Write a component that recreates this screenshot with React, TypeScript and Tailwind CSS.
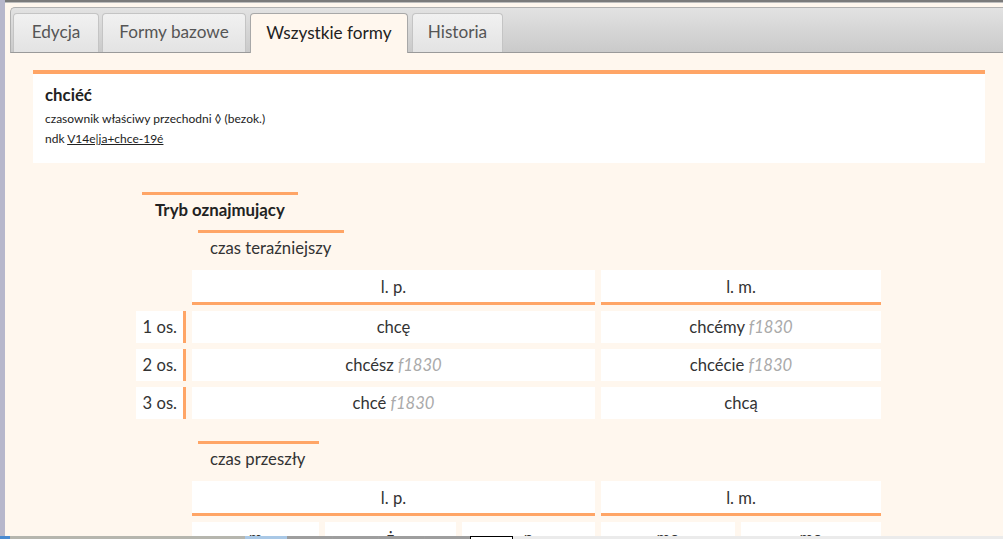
import React from "react";

const F = ({ children }: { children: React.ReactNode }) => (
  <span className="italic text-[#aaaaaa]">{children}</span>
);

function Cell({ children, className = "" }: { children?: React.ReactNode; className?: string }) {
  return (
    <div className={`bg-white h-[32px] flex items-center justify-center text-[16.6px] text-[#333] ${className}`}>
      {children}
    </div>
  );
}

function Label({ children }: { children: React.ReactNode }) {
  return (
    <div className="bg-white h-[32px] flex items-center justify-end pr-[6px] border-r-[3px] border-[#ffa566] text-[16.6px] text-[#333]">
      {children}
    </div>
  );
}

function Header() {
  return (
    <>
      <div />
      <div className="bg-white h-[35px] border-b-[3px] border-[#ffa566] flex items-center justify-center text-[16.6px] text-[#333] pt-[2px]">
        l. p.
      </div>
      <div className="bg-white h-[35px] border-b-[3px] border-[#ffa566] flex items-center justify-center text-[16.6px] text-[#333] pt-[2px]">
        l. m.
      </div>
    </>
  );
}

function Sub({ children, className = "" }: { children: React.ReactNode; className?: string }) {
  return (
    <div className={`ml-[62px] inline-block self-start border-t-[3px] border-[#ffa566] pl-[12px] pt-[4px] pb-[4px] text-[16.7px] leading-[22px] text-[#333] ${className}`}>
      {children}
    </div>
  );
}

export default function App() {
  const tabs = [
    { t: "Edycja", w: "w-[86px]" },
    { t: "Formy bazowe", w: "w-[144px]" },
    { t: "Wszystkie formy", w: "w-[158px]", active: true },
    { t: "Historia", w: "w-[91px]" },
  ];
  return (
    <div className="relative w-[1003px] h-[539px] overflow-hidden flex font-['Lato',sans-serif] bg-[#fff7ee]">
      <div className="w-[5px] h-full bg-[#b7b7cb] shrink-0" />
      <div className="flex-1 flex flex-col bg-[#fff7ee] min-w-0">
        <div className="h-[2px] bg-[#7a7a7a] shrink-0" />
        <div className="h-[1px] bg-[#bdbdbd] shrink-0" />
        <div className="h-[4px] shrink-0" />
        {/* tab bar */}
        <div className="ml-[5px] h-[46px] shrink-0 rounded-tl-[5px] border-t border-l border-[#b0b0b0] border-b border-b-[#9a9a9a] bg-gradient-to-b from-[#e2e2e2] to-[#cacaca] flex items-end pl-[2px] gap-[3px] relative">
          {tabs.map((tab, i) => (
            <div
              key={tab.t}
              className={`${tab.w} ${i === 3 ? "ml-[1px]" : ""} ${i === 2 ? "ml-[1px]" : ""} h-[39px] rounded-t-[4px] border border-b-0 flex items-center justify-center text-[17.2px] ${
                tab.active
                  ? "bg-[#fff7ee] border-[#a8a8a8] text-[#222] h-[40px] -mb-[1px] relative z-10"
                  : "bg-gradient-to-b from-[#f1f1f1] to-[#e3e3e3] border-[#c4c4c4] text-[#555]"
              }`}
            >
              <span className="pb-[2px]">{tab.t}</span>
            </div>
          ))}
        </div>

        {/* card */}
        <div className="mt-[17px] ml-[28px] mr-[18px] bg-white border-t-4 border-[#ffa566] h-[93px] pl-[12px] pt-[10px] text-[#222] shrink-0">
          <div className="text-[16.8px] font-bold leading-[22px]">chciéć</div>
          <div className="text-[12px] leading-[15px] mt-[5px]">czasownik właściwy przechodni ◊ (bezok.)</div>
          <div className="text-[12px] leading-[15px] mt-[5px]">
            ndk <span className="underline">V14e|ja+chce-19é</span>
          </div>
        </div>

        {/* section */}
        <div className="ml-[131px] mt-[29px] flex flex-col shrink-0">
          <div className="ml-[6px] self-start w-[156px] border-t-[3px] border-[#ffa566] pl-[13px] pt-[4px] pb-[4px] text-[16.8px] leading-[22px] font-bold text-[#222] whitespace-nowrap">
            Tryb oznajmujący
          </div>
          <Sub className="mt-[5px] w-[146px]">czas teraźniejszy</Sub>
          <div className="grid grid-cols-[50px_403px_280px] gap-[6px] mt-[7px]">
            <Header />
            <Label>1 os.</Label>
            <Cell>chcę</Cell>
            <Cell>
              chcémy&nbsp;<F>f1830</F>
            </Cell>
            <Label>2 os.</Label>
            <Cell>
              chcész&nbsp;<F>f1830</F>
            </Cell>
            <Cell>
              chcécie&nbsp;<F>f1830</F>
            </Cell>
            <Label>3 os.</Label>
            <Cell>
              chcé&nbsp;<F>f1830</F>
            </Cell>
            <Cell>chcą</Cell>
          </div>
          <Sub className="mt-[22px] w-[121px]">czas przeszły</Sub>
          <div className="grid grid-cols-[50px_403px_280px] gap-[6px] mt-[7px]">
            <Header />
            <div />
            <div className="grid grid-cols-[127px_131px_133px] gap-[6px]">
              <Cell>m</Cell>
              <Cell>ż</Cell>
              <Cell>n</Cell>
            </div>
            <div className="grid grid-cols-[134px_140px] gap-[6px]">
              <Cell>mo</Cell>
              <Cell>mo</Cell>
            </div>
          </div>
        </div>
      </div>

      {/* bottom strip overlay */}
      <div className="absolute left-0 right-0 bottom-0 h-[3px] flex">
        <div className="w-[10px] bg-[#4a8ad0]" />
        <div className="w-[235px] bg-[#b6b6ae]" />
        <div className="w-[42px] bg-[#a9c8e6]" />
        <div className="w-[183px] bg-[#a0a0a0] flex gap-[1px]">
          <div className="flex-1 bg-[#9e9e9e]" />
          <div className="flex-1 bg-[#9e9e9e]" />
          <div className="flex-1 bg-[#9e9e9e]" />
          <div className="flex-1 bg-[#9e9e9e]" />
        </div>
        <div className="w-[43px] bg-white border-t border-l border-r border-black" />
        <div className="flex-1 bg-[#ebebeb]" />
      </div>
    </div>
  );
}
